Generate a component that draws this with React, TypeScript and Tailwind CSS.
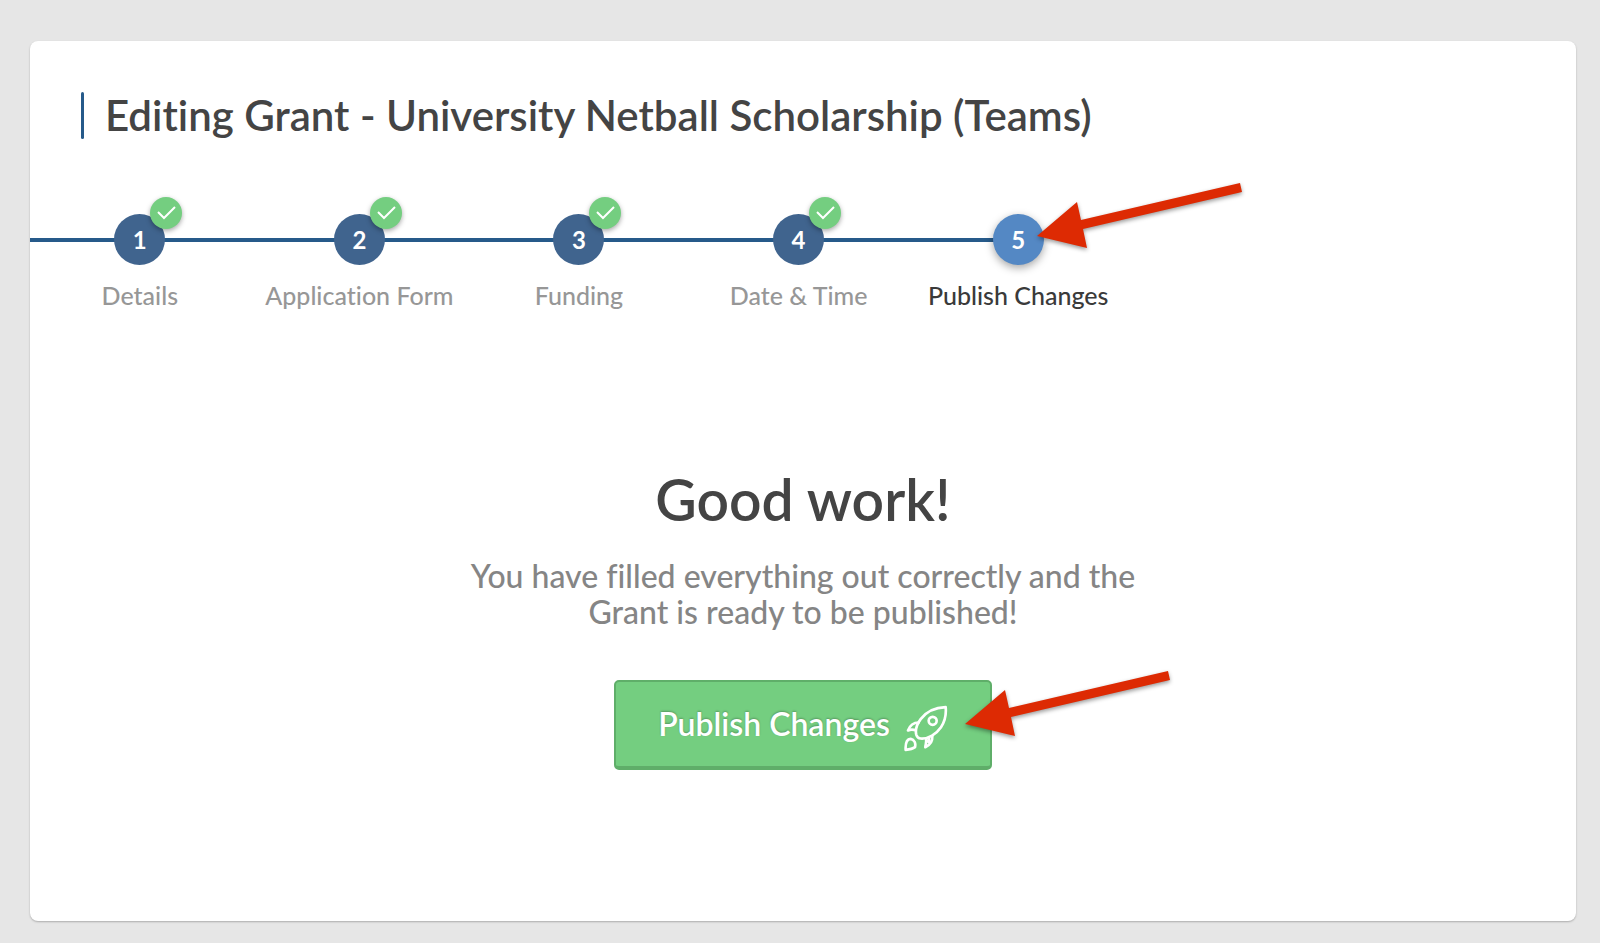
import React from "react";

interface StepProps {
  number: number;
  label: string;
  active?: boolean;
}

const steps: StepProps[] = [
  { number: 1, label: "Details" },
  { number: 2, label: "Application Form" },
  { number: 3, label: "Funding" },
  { number: 4, label: "Date & Time" },
  { number: 5, label: "Publish Changes", active: true },
];

const Arrow: React.FC<{ className: string }> = ({ className }) => {
  return (
    <svg
      className={`pointer-events-none absolute drop-shadow-[0_2px_2px_rgba(0,0,0,0.4)] ${className}`}
      width="206"
      height="66"
      viewBox="0 0 206 66"
      fill="#dd2a03"
      aria-hidden="true"
    >
      <path d="M0 53 40 19 44 37 203 0 205 9 46 46 50 65Z" />
    </svg>
  );
};

const Rocket: React.FC = () => {
  return (
    <svg
      className="mt-2"
      width="44"
      height="47"
      viewBox="70 136 132 140"
      fill="none"
      stroke="currentColor"
      strokeWidth="8"
      strokeLinecap="round"
      strokeLinejoin="round"
      aria-hidden="true"
    >
      <path d="M195 142C164 143 139 153 120 178C109 193 103 210 107 225Q110 235 120 236C144 238 167 222 181 202C194 183 197 163 195 142Z" />
      <circle cx="156" cy="183" r="12" />
      <path d="M114 188C98 188 88 196 82 212C90 208 97 209 105 211" />
      <path d="M155 229C156 245 148 256 134 262C134 254 139 248 136 237M145 234L144 247" />
      <path d="M75 270C74 253 76 238 90 237C101 239 106 250 103 262C95 268 86 269 75 270Z" />
    </svg>
  );
};

const Step: React.FC<{ props: StepProps }> = ({ props }) => {
  return (
    <li
      className="relative flex flex-1 flex-col items-center"
      aria-current={props.active ? "step" : undefined}
    >
      <div
        className={`absolute top-6 left-0 h-1 bg-[#265a8a] ${props.active ? "w-1/2" : "w-full"}`}
      />
      <div
        className={`relative flex size-[51px] items-center justify-center rounded-full text-2xl font-bold text-white ${
          props.active
            ? "bg-[#5488c4] shadow-[0_3px_9px_rgba(0,0,0,0.35)]"
            : "bg-[#40648e]"
        }`}
      >
        {props.number}
        {!props.active && (
          <span className="absolute -top-[17px] -right-[17px] flex size-8 items-center justify-center rounded-full bg-[#74ce80] shadow-[0_2px_5px_rgba(0,0,0,0.35)]">
            <svg
              width="20"
              height="14"
              viewBox="0 0 20 14"
              fill="none"
              stroke="white"
              strokeWidth="2"
              aria-hidden="true"
            >
              <path d="M2 6 8 12 19 1" />
            </svg>
          </span>
        )}
        {props.active && <Arrow className="top-[-31px] left-[44px]" />}
      </div>
      <span
        className={`mt-[14px] text-[25px] leading-8 font-medium whitespace-nowrap ${
          props.active ? "text-[#3a3a3a]" : "text-[#979797]"
        }`}
      >
        {props.label}
      </span>
    </li>
  );
};

const App: React.FC = () => {
  return (
    <div className="flex min-h-screen bg-[#e6e6e6] pt-[41px] pr-6 pb-[22px] pl-[30px] font-['Lato',sans-serif] [font-variant-ligatures:none]">
      <main className="flex-1 rounded-lg bg-white pt-[51px] shadow-[0_1px_2px_rgba(0,0,0,0.25)]">
        <div className="ml-[51px] flex items-center gap-[21px]">
          <div className="h-[47px] w-[3px] rounded-full bg-[#265a8a]" />
          <h1 className="text-[42px] leading-[47px] font-semibold text-[#444444]">
            Editing Grant - University Netball Scholarship (Teams)
          </h1>
        </div>

        <ol className="mt-[75px] flex max-w-[1098px]">
          {steps.map((step) => (
            <Step key={step.number} props={step} />
          ))}
        </ol>

        <section className="mt-[153px] flex flex-col items-center text-center">
          <h2 className="text-[57px] leading-[70px] font-semibold text-[#444444]">
            Good work!
          </h2>
          <p className="mt-6 max-w-[700px] text-[32px] leading-9 font-medium text-[#858585]">
            You have filled everything out correctly and the Grant is ready to
            be published!
          </p>
          <button
            type="button"
            className="relative mt-[50px] flex h-[90px] items-center gap-[14px] rounded-[5px] border-2 border-b-4 border-[#5fae69] bg-[#74ce80] px-[42px] text-[32px] font-semibold text-white"
          >
            <span className="[text-shadow:0_-1px_2px_rgba(0,0,0,0.25)]">
              Publish Changes
            </span>
            <Rocket />
            <Arrow className="top-[-11px] right-[-181px]" />
          </button>
        </section>
      </main>
    </div>
  );
};

export default App;
